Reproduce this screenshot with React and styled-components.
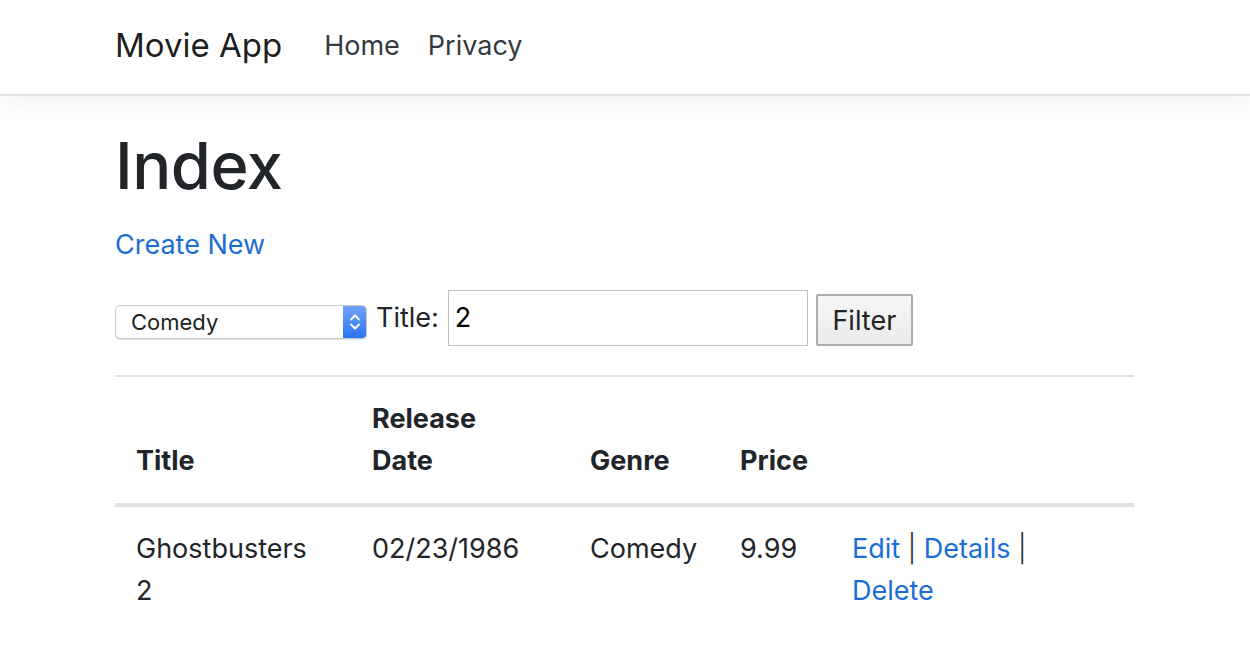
import React from "react";
import styled, { createGlobalStyle } from "styled-components";

const GlobalStyle = createGlobalStyle`
  html, body {
    margin: 0;
    padding: 0;
    background: #fff;
  }
  body {
    font-family: Inter, "Noto Sans", "Liberation Sans", sans-serif;
    font-size: 28px;
    line-height: 1.5;
    color: #212529;
  }
  * {
    box-sizing: border-box;
  }
`;

const Navbar = styled.header`
  height: 96px;
  background: #fff;
  border-bottom: 2px solid #e1e4e8;
  box-shadow: 0 7px 21px rgba(0, 0, 0, 0.05);
  margin-bottom: 28px;
`;

const NavInner = styled.nav`
  width: 1019px;
  margin-left: 115px;
  height: 92px;
  display: flex;
  align-items: center;
`;

const Brand = styled.a`
  font-size: 33px;
  color: rgba(0, 0, 0, 0.9);
  text-decoration: none;
  margin-right: 42px;
`;

const NavLinks = styled.ul`
  display: flex;
  list-style: none;
  margin: 0;
  padding: 0;
  gap: 28px;
`;

const NavLink = styled.li`
  font-size: 27px;
  color: #343a40;
  cursor: pointer;
`;

const Main = styled.main`
  width: 1019px;
  margin-left: 115px;
`;

const Heading = styled.h1`
  font-size: 65px;
  font-weight: 500;
  line-height: 84px;
  margin: 0 0 16px;
  letter-spacing: -0.5px;
`;

const Para = styled.p`
  margin: 0 0 ${(p) => p.$gap || "28px"};
  display: flex;
  align-items: center;
  height: ${(p) => p.$height || "42px"};
`;

const Link = styled.a`
  color: #1b6dd6;
  text-decoration: none;
  font-size: 27px;
  cursor: pointer;
`;

const Select = styled.div`
  position: relative;
  width: 252px;
  height: 34px;
  margin-top: 8px;
  border: 1px solid #c8c8c8;
  border-radius: 5px;
  background: #fff;
  box-shadow: 0 1px 1px rgba(0, 0, 0, 0.12);
  display: flex;
  align-items: center;
  font-size: 22px;
  color: #222;
  padding-left: 15px;
  overflow: hidden;
`;

const Stepper = styled.span`
  position: absolute;
  right: 0;
  top: 0;
  bottom: 0;
  width: 23px;
  background: linear-gradient(#6fa3f8, #2a74f3);
  display: flex;
  align-items: center;
  justify-content: center;
`;

const Label = styled.label`
  font-size: 27px;
  margin: 0 9px;
  color: #212529;
`;

const Input = styled.div`
  width: 360px;
  height: 56px;
  border: 1px solid #c2c2c2;
  padding-left: 6px;
  display: flex;
  align-items: center;
  font-size: 27px;
  color: #000;
`;

const Button = styled.button`
  margin-left: 8px;
  margin-top: 4px;
  width: 97px;
  height: 52px;
  border: 2px solid #acacac;
  border-radius: 2px;
  background: linear-gradient(#f6f6f6, #ebebeb);
  font-family: inherit;
  font-size: 27px;
  color: #222;
  padding: 0;
`;

const Table = styled.table`
  width: 1019px;
  table-layout: fixed;
  border-collapse: collapse;
  border-top: 2px solid #dee2e6;
`;

const Th = styled.th`
  width: ${(p) => p.$w}px;
  text-align: left;
  vertical-align: bottom;
  font-weight: 700;
  font-size: 27px;
  line-height: 42px;
  padding: 21px;
  padding-right: ${(p) => (p.$narrow ? "60px" : "21px")};
  border-bottom: 4px solid #dee2e6;
`;

const Td = styled.td`
  vertical-align: top;
  font-size: 27px;
  line-height: 42px;
  padding: 21px;
`;

const Sep = styled.span`
  color: #212529;
  font-weight: 300;
`;

const Chevrons = () => (
  <svg width="12" height="20" viewBox="0 0 12 20" fill="none">
    <path d="M2 7.5 6 3.5l4 4" stroke="#fff" strokeWidth="1.8" strokeLinecap="round" strokeLinejoin="round" />
    <path d="M2 12.5l4 4 4-4" stroke="#fff" strokeWidth="1.8" strokeLinecap="round" strokeLinejoin="round" />
  </svg>
);

const App = () => {
  return (
    <>
      <GlobalStyle />
      <Navbar>
        <NavInner>
          <Brand>Movie App</Brand>
          <NavLinks>
            <NavLink>Home</NavLink>
            <NavLink>Privacy</NavLink>
          </NavLinks>
        </NavInner>
      </Navbar>
      <Main>
        <Heading>Index</Heading>
        <Para $gap="24px">
          <Link>Create New</Link>
        </Para>
        <Para $height="56px" $gap="29px">
          <Select>
            Comedy
            <Stepper>
              <Chevrons />
            </Stepper>
          </Select>
          <Label>Title:</Label>
          <Input>2</Input>
          <Button>Filter</Button>
        </Para>
        <Table>
          <thead>
            <tr>
              <Th $w={236}>Title</Th>
              <Th $w={218} $narrow>
                Release Date
              </Th>
              <Th $w={150}>Genre</Th>
              <Th $w={112}>Price</Th>
              <Th $w={303}></Th>
            </tr>
          </thead>
          <tbody>
            <tr>
              <Td>Ghostbusters 2</Td>
              <Td>02/23/1986</Td>
              <Td>Comedy</Td>
              <Td>9.99</Td>
              <Td>
                <Link>Edit</Link> <Sep>|</Sep> <Link>Details</Link> <Sep>|</Sep>{" "}
                <Link>Delete</Link>
              </Td>
            </tr>
          </tbody>
        </Table>
      </Main>
    </>
  );
};

export default App;
